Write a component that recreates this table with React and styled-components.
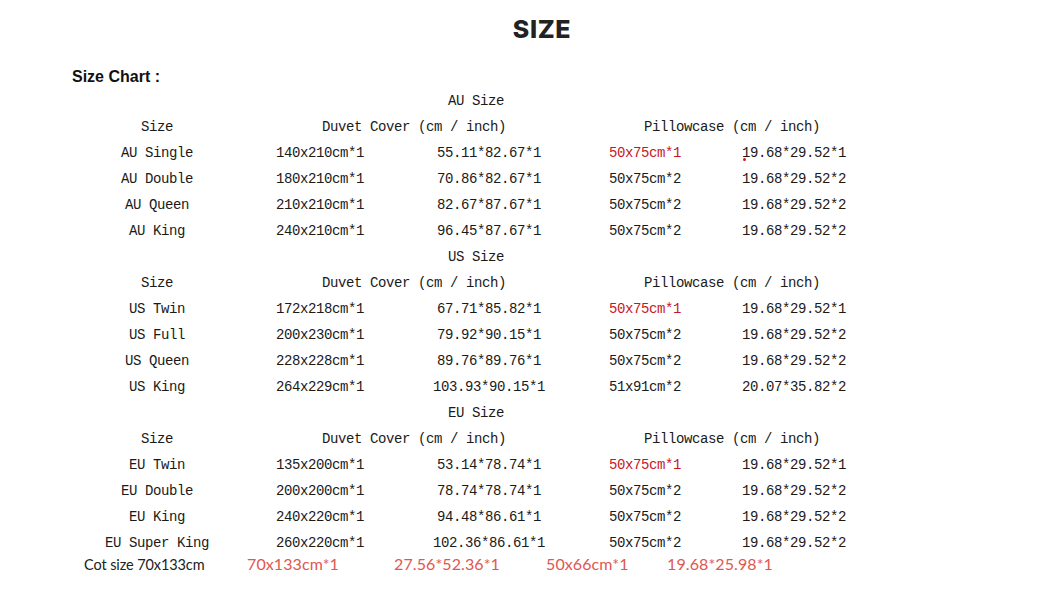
import React from 'react'
import styled, { createGlobalStyle } from 'styled-components'

const GlobalStyle = createGlobalStyle`
  body {
    margin: 0;
    background: #fff;
    font-family: 'Liberation Sans', Arial, sans-serif;
  }
`

const SECTIONS = [
  {
    title: 'AU Size',
    rows: [
      ['AU Single', '140x210cm*1', '55.11*82.67*1', '50x75cm*1', '19.68*29.52*1', true],
      ['AU Double', '180x210cm*1', '70.86*82.67*1', '50x75cm*2', '19.68*29.52*2'],
      ['AU Queen', '210x210cm*1', '82.67*87.67*1', '50x75cm*2', '19.68*29.52*2'],
      ['AU King', '240x210cm*1', '96.45*87.67*1', '50x75cm*2', '19.68*29.52*2'],
    ],
  },
  {
    title: 'US Size',
    rows: [
      ['US Twin', '172x218cm*1', '67.71*85.82*1', '50x75cm*1', '19.68*29.52*1', true],
      ['US Full', '200x230cm*1', '79.92*90.15*1', '50x75cm*2', '19.68*29.52*2'],
      ['US Queen', '228x228cm*1', '89.76*89.76*1', '50x75cm*2', '19.68*29.52*2'],
      ['US King', '264x229cm*1', '103.93*90.15*1', '51x91cm*2', '20.07*35.82*2'],
    ],
  },
  {
    title: 'EU Size',
    rows: [
      ['EU Twin', '135x200cm*1', '53.14*78.74*1', '50x75cm*1', '19.68*29.52*1', true],
      ['EU Double', '200x200cm*1', '78.74*78.74*1', '50x75cm*2', '19.68*29.52*2'],
      ['EU King', '240x220cm*1', '94.48*86.61*1', '50x75cm*2', '19.68*29.52*2'],
      ['EU Super King', '260x220cm*1', '102.36*86.61*1', '50x75cm*2', '19.68*29.52*2'],
    ],
  },
]

const Page = styled.div`
  width: 940px;
  margin-left: 72px;
  padding-top: 13px;
`

const Title = styled.h2`
  margin: 0;
  text-align: center;
  font-family: Inter, 'Liberation Sans', sans-serif;
  font-weight: 800;
  font-size: 25px;
  letter-spacing: 0.6px;
  line-height: 32px;
  color: #222;
`

const ChartLabel = styled.div`
  margin-top: 21px;
  font-family: 'Liberation Sans', Arial, sans-serif;
  font-weight: 700;
  font-size: 16px;
  line-height: 22px;
  color: #111;
`

// column widths keep each column centred where the chart image has it
const Table = styled.div`
  display: grid;
  grid-template-columns: 170px 156px 182px 130px 168px;
  grid-auto-rows: 26px;
  align-items: center;
  width: 806px;
  font-family: 'Liberation Mono', 'Courier New', monospace;
  font-size: 14px;
  letter-spacing: -0.4px;
  color: #1a1a1a;
`

const SectionTitle = styled.div`
  grid-column: 1 / -1;
  padding-left: 376px;
`

const Header = styled.div`
  grid-column: ${({ $span }) => $span};
  padding-left: ${({ $indent }) => $indent}px;
  white-space: nowrap;
`

const Cell = styled.div`
  text-align: center;
  white-space: nowrap;
  color: ${({ $red }) => ($red ? '#c9161e' : 'inherit')};
  position: relative;
`

const Dot = styled.span`
  position: absolute;
  left: 33px;
  top: 13px;
  width: 3px;
  height: 3px;
  border-radius: 50%;
  background: #d9141c;
`

const CotRow = styled.div`
  display: flex;
  align-items: baseline;
  height: 22px;
  margin-top: -2px;
  padding-left: 12px;
  font-family: Lato, 'Liberation Sans', sans-serif;
`

const CotLabel = styled.span`
  width: 163px;
  font-size: 14.5px;
  letter-spacing: -0.1px;
  color: #222;
`

const CotValue = styled.span`
  width: ${({ $w }) => $w}px;
  font-size: 16px;
  letter-spacing: 0.1px;
  color: #e0574f;
`

function Section({ title, rows }) {
  return (
    <>
      <SectionTitle>{title}</SectionTitle>
      <Cell>Size</Cell>
      <Header $span="2 / 4" $indent={80}>Duvet Cover (cm / inch)</Header>
      <Header $span="4 / 6" $indent={64}>Pillowcase (cm / inch)</Header>
      {rows.map(([name, dcm, din, pcm, pin, first]) => (
        <React.Fragment key={name}>
          <Cell>{name}</Cell>
          <Cell>{dcm}</Cell>
          <Cell>{din}</Cell>
          <Cell $red={first}>{pcm}</Cell>
          <Cell>
            {first && title === 'AU Size' && <Dot />}
            {pin}
          </Cell>
        </React.Fragment>
      ))}
    </>
  )
}

export default function App() {
  return (
    <>
      <GlobalStyle />
      <Page>
        <Title>SIZE</Title>
        <ChartLabel>Size Chart :</ChartLabel>
        <Table>
          {SECTIONS.map((s) => (
            <Section key={s.title} {...s} />
          ))}
        </Table>
        <CotRow>
          <CotLabel>Cot size 70x133cm</CotLabel>
          <CotValue $w={147}>70x133cm*1</CotValue>
          <CotValue $w={152}>27.56*52.36*1</CotValue>
          <CotValue $w={121}>50x66cm*1</CotValue>
          <CotValue $w={120}>19.68*25.98*1</CotValue>
        </CotRow>
      </Page>
    </>
  )
}
